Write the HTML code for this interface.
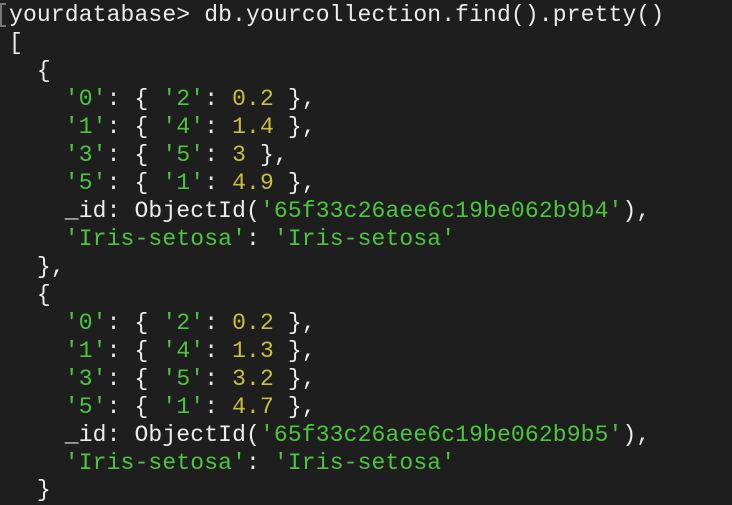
<!DOCTYPE html>
<html><head><meta charset="utf-8"><style>
html,body{margin:0;padding:0;background:#1e1e1e;width:732px;height:492px;overflow:hidden}
pre{margin:0;position:absolute;left:9px;top:2px;font-family:"Liberation Mono",monospace;font-size:23px;line-height:27.97px;color:#ececec;letter-spacing:0.14px}
.g{color:#4cc63f}.y{color:#c6c03c}
.c{position:absolute;left:0;top:3px;height:24px;border:2px solid #777;border-right:none;box-sizing:border-box;width:6px}
</style></head><body>
<div class="c"></div>
<pre>yourdatabase&gt; db.yourcollection.find().pretty()
[
  {
    <span class="g">'0'</span>: { <span class="g">'2'</span>: <span class="y">0.2</span> },
    <span class="g">'1'</span>: { <span class="g">'4'</span>: <span class="y">1.4</span> },
    <span class="g">'3'</span>: { <span class="g">'5'</span>: <span class="y">3</span> },
    <span class="g">'5'</span>: { <span class="g">'1'</span>: <span class="y">4.9</span> },
    _id: ObjectId(<span class="g">'65f33c26aee6c19be062b9b4'</span>),
    <span class="g">'Iris-setosa'</span>: <span class="g">'Iris-setosa'</span>
  },
  {
    <span class="g">'0'</span>: { <span class="g">'2'</span>: <span class="y">0.2</span> },
    <span class="g">'1'</span>: { <span class="g">'4'</span>: <span class="y">1.3</span> },
    <span class="g">'3'</span>: { <span class="g">'5'</span>: <span class="y">3.2</span> },
    <span class="g">'5'</span>: { <span class="g">'1'</span>: <span class="y">4.7</span> },
    _id: ObjectId(<span class="g">'65f33c26aee6c19be062b9b5'</span>),
    <span class="g">'Iris-setosa'</span>: <span class="g">'Iris-setosa'</span>
  }
</pre>
</body></html>
